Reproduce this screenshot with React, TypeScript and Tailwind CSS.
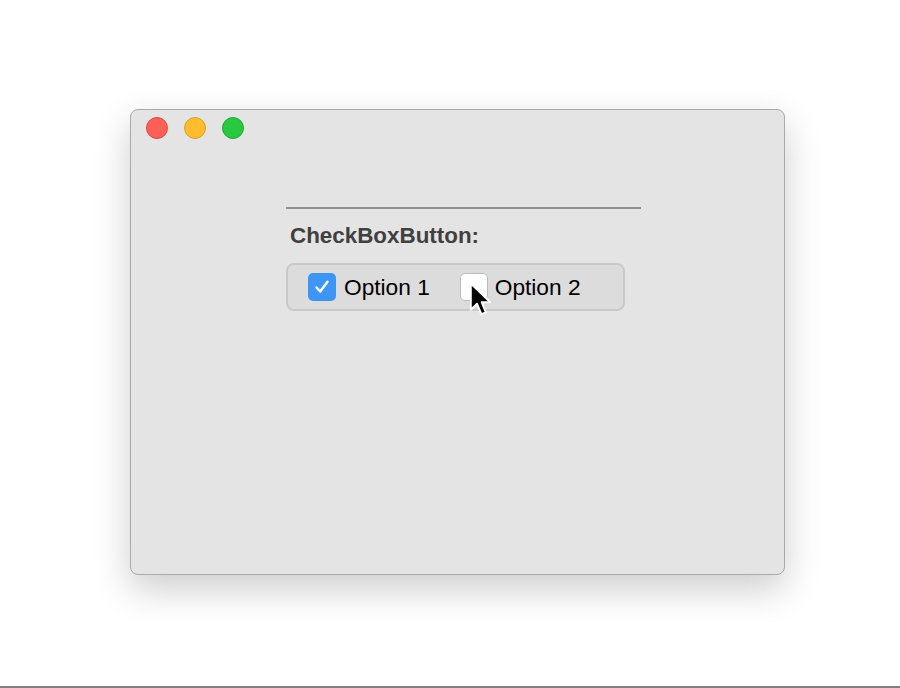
import React from "react";

function Check() {
  return (
    <svg width="18" height="18" viewBox="0 0 18 18" fill="none">
      <path d="M3.5 9.5 L7.2 13.5 L14.5 3.8" stroke="white" strokeWidth="2.4" strokeLinecap="round" strokeLinejoin="round" />
    </svg>
  );
}

function Cursor() {
  return (
    <svg width="27" height="40" viewBox="0 0 24 36" className="absolute left-[8px] top-[8px]">
      <path
        d="M1.5 1.5 L1.5 25 L7 19.5 L11 29 L15 27.3 L11.2 18.2 L19 18.2 Z"
        fill="black"
        stroke="white"
        strokeWidth="1.7"
        strokeLinejoin="round"
      />
    </svg>
  );
}

export default function App() {
  return (
    <div
      className="w-[900px] h-[688px] bg-white flex flex-col"
      style={{ fontFamily: '"Liberation Sans", Arial, sans-serif' }}
    >
      <div className="flex-1 pt-[109px] pl-[130px]">
        <div className="w-[655px] h-[466px] rounded-[8px] border border-[#aaaaaa] bg-[#e4e4e4] shadow-[0_14px_36px_rgba(0,0,0,0.2)] flex flex-col">
          <div className="flex gap-[16px] ml-[15px] mt-[7px]">
            <div className="w-[22px] h-[22px] rounded-full bg-[#fe5f57] border border-[#e0443e]" />
            <div className="w-[22px] h-[22px] rounded-full bg-[#febc2e] border border-[#dea123]" />
            <div className="w-[22px] h-[22px] rounded-full bg-[#28c840] border border-[#1aab29]" />
          </div>
          <div className="ml-[155px] mt-[68px] flex flex-col w-[355px]">
            <div className="h-[2px] w-[355px] bg-[#8f8f8f]" />
            <div className="mt-[14px] ml-[4px] text-[22.4px] leading-[26px] font-bold text-[#404040]">
              CheckBoxButton:
            </div>
            <div className="mt-[14px] w-[339px] h-[48px] rounded-[8px] border-2 border-[#c9c9c9] bg-[#dcdcdc] flex items-center pl-[20px]">
              <div className="w-[28px] h-[28px] rounded-[5px] bg-[#3d96f6] flex items-center justify-center">
                <Check />
              </div>
              <span className="ml-[8px] text-[22.7px] leading-[26px] text-black">Option 1</span>
              <div className="relative ml-[30px] w-[28px] h-[28px] rounded-[5px] bg-white border border-[#bcbcbc]">
                <Cursor />
              </div>
              <span className="ml-[7px] text-[22.7px] leading-[26px] text-black">Option 2</span>
            </div>
          </div>
        </div>
      </div>
      <div className="h-[2px] bg-[#7f7f7f]" />
    </div>
  );
}
